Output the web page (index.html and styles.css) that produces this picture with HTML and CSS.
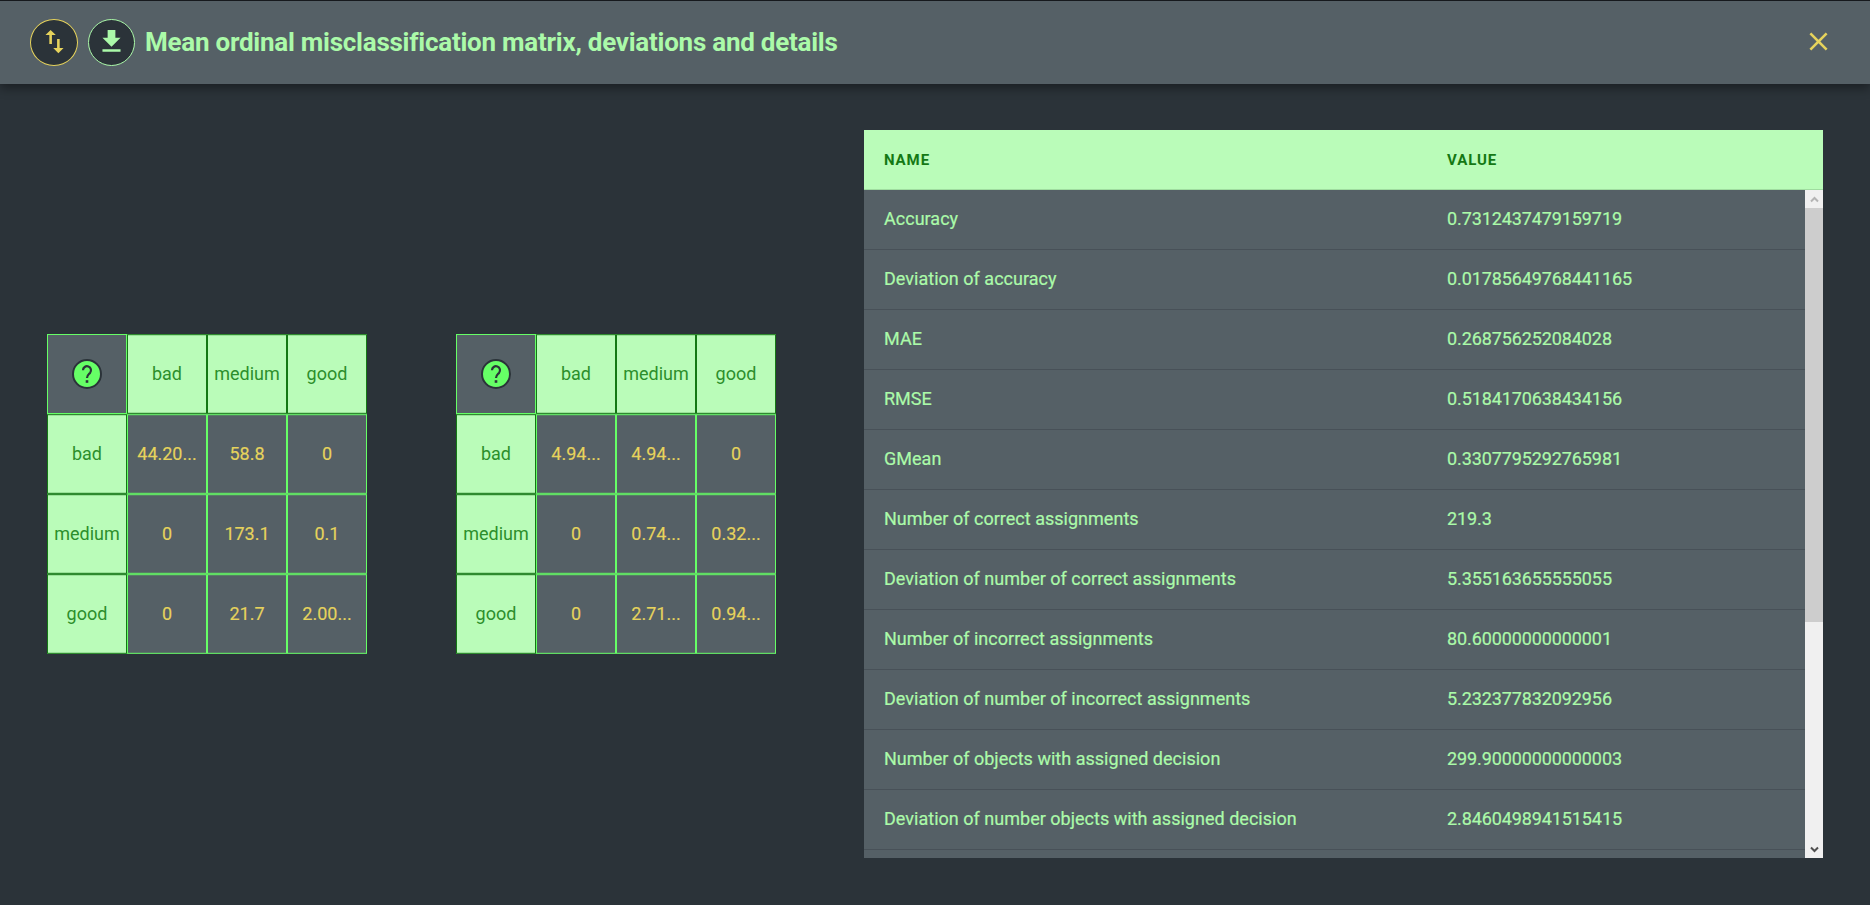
FILE: index.html
```html
<!DOCTYPE html>
<html lang="en">
<head>
<meta charset="utf-8">
<title>Mean ordinal misclassification matrix</title>
<link rel="stylesheet" href="styles.css">
</head>
<body>
<header class="bar">
  <button class="round round-yellow" aria-label="Swap"><svg width="31" height="31" viewBox="0 0 24 24"><path d="M16 17.01V10h-2v7.01h-3L15 21l4-3.99h-3zM9 3L5 6.99h3V14h2V6.99h3L9 3z"/></svg></button>
  <button class="round round-green" aria-label="Download"><svg width="31" height="31" viewBox="0 0 24 24"><path d="M19 9h-4V3H9v6H5l7 7 7-7zM5 18v2h14v-2H5z"/></svg></button>
  <h1 class="title">Mean ordinal misclassification matrix, deviations and details</h1>
  <button class="close" aria-label="Close"><svg width="31" height="31" viewBox="0 0 24 24"><path d="M19 6.41L17.59 5 12 10.59 6.41 5 5 6.41 10.59 12 5 17.59 6.41 19 12 13.41 17.59 19 19 17.59 13.41 12z"/></svg></button>
</header>
<main class="content">
  <section class="matrix">
    <div class="cell corner"><svg class="help" width="36" height="36" viewBox="0 0 36 36"><circle cx="18" cy="18" r="14"/><path d="M14 14.300a4 4 0 1 1 7 2.600c-1.400 1.500-3 2.300-3 5.100"/><rect x="16.700" y="24.200" width="2.600" height="2.600"/></svg></div>
    <div class="cell head">bad</div><div class="cell head">medium</div><div class="cell head">good</div>
    <div class="cell head">bad</div><div class="cell">44.20...</div><div class="cell">58.8</div><div class="cell">0</div>
    <div class="cell head">medium</div><div class="cell">0</div><div class="cell">173.1</div><div class="cell">0.1</div>
    <div class="cell head">good</div><div class="cell">0</div><div class="cell">21.7</div><div class="cell">2.00...</div>
  </section>
  <section class="matrix">
    <div class="cell corner"><svg class="help" width="36" height="36" viewBox="0 0 36 36"><circle cx="18" cy="18" r="14"/><path d="M14 14.300a4 4 0 1 1 7 2.600c-1.400 1.500-3 2.300-3 5.100"/><rect x="16.700" y="24.200" width="2.600" height="2.600"/></svg></div>
    <div class="cell head">bad</div><div class="cell head">medium</div><div class="cell head">good</div>
    <div class="cell head">bad</div><div class="cell">4.94...</div><div class="cell">4.94...</div><div class="cell">0</div>
    <div class="cell head">medium</div><div class="cell">0</div><div class="cell">0.74...</div><div class="cell">0.32...</div>
    <div class="cell head">good</div><div class="cell">0</div><div class="cell">2.71...</div><div class="cell">0.94...</div>
  </section>
  <section class="table">
    <div class="row thead"><span>NAME</span><span>VALUE</span></div>
    <div class="body">
      <div class="rows">
        <div class="row"><span>Accuracy</span><span class="value">0.7312437479159719</span></div>
        <div class="row"><span>Deviation of accuracy</span><span class="value">0.01785649768441165</span></div>
        <div class="row"><span>MAE</span><span class="value">0.268756252084028</span></div>
        <div class="row"><span>RMSE</span><span class="value">0.5184170638434156</span></div>
        <div class="row"><span>GMean</span><span class="value">0.3307795292765981</span></div>
        <div class="row"><span>Number of correct assignments</span><span class="value">219.3</span></div>
        <div class="row"><span>Deviation of number of correct assignments</span><span class="value">5.355163655555055</span></div>
        <div class="row"><span>Number of incorrect assignments</span><span class="value">80.60000000000001</span></div>
        <div class="row"><span>Deviation of number of incorrect assignments</span><span class="value">5.232377832092956</span></div>
        <div class="row"><span>Number of objects with assigned decision</span><span class="value">299.90000000000003</span></div>
        <div class="row"><span>Deviation of number objects with assigned decision</span><span class="value">2.8460498941515415</span></div>
      </div>
      <div class="scroll">
        <svg class="arrow up" width="18" height="18" viewBox="0 0 18 18"><path d="M6 11.500 9.500 8l3.500 3.500"/></svg>
        <div class="thumb"></div>
        <svg class="arrow down" width="18" height="18" viewBox="0 0 18 18"><path d="M6 7.500 9.500 11 13 7.500"/></svg>
      </div>
    </div>
  </section>
</main>
</body>
</html>
```
FILE: styles.css
```css
* { box-sizing: border-box; }
body {
  margin: 0;
  height: 905px;
  overflow: hidden;
  background: #2b3339;
  font-family: Roboto, "Liberation Sans", sans-serif;
}
.bar {
  display: flex;
  align-items: center;
  height: 84px;
  padding: 0 36px 0 30px;
  border-top: 1px solid #16191d;
  background: #556066;
  box-shadow: 0 4px 10px rgba(0, 0, 0, .4);
}
button { padding: 0; border: 0; background: none; display: flex; align-items: center; justify-content: center; }
.round { width: 48px; height: 47px; border-radius: 50%; background: #2b3339; border: 1px solid; }
.round-yellow { color: #e6d35c; margin-right: 10px; }
.round-green { width: 47px; color: #abfaa9; }
button svg { fill: currentColor; margin-bottom: 2px; }
.title {
  margin: 0 auto 0 10px;
  padding-bottom: 2px;
  font-size: 26px;
  line-height: 30px;
  font-weight: 700;
  letter-spacing: -.25px;
  color: #abfaa9;
  white-space: nowrap;
}
.close { width: 32px; height: 33px; color: #e6d35c; }
.content { display: flex; align-items: center; height: 820px; padding-left: 47px; }
.matrix {
  display: grid;
  grid-template-columns: repeat(4, 80px);
  grid-template-rows: repeat(4, 80px);
  margin-right: 89px;
}
.cell {
  display: flex;
  align-items: center;
  justify-content: center;
  padding-bottom: 1px;
  border: 1px solid #66ff66;
  background: #556066;
  color: #e6d35c;
  font-size: 18px;
  -webkit-text-stroke: .15px;
  transform: scaleY(.995);
}
.corner { padding: 0; transform: none; }
.head { border-color: #147814; background: #bafcb9; color: #2c8f2c; -webkit-text-stroke: 0; }
.help circle { fill: #66ff66; stroke: #2b3339; stroke-width: 2; }
.help path { fill: none; stroke: #2b3339; stroke-width: 2.2; }
.help rect { fill: #2b3339; }
.table { width: 959px; height: 728px; margin-left: -1px; background: #556066; }
.row {
  display: grid;
  grid-template-columns: 563px 1fr;
  align-items: center;
  height: 60px;
  padding: 0 0 2px 20px;
  border-bottom: 1px solid #485158;
  color: #abfaa9;
  font-size: 18px;
  letter-spacing: .02px;
  -webkit-text-stroke: .2px;
}
.value { letter-spacing: -.1px; }
.thead {
  padding: 0 0 0 20px;
  background: #bafcb9;
  color: #147814;
  border-color: #9fdc9f;
  font-size: 15px;
  font-weight: 700;
  letter-spacing: .9px;
  -webkit-text-stroke: 0;
}
.body { display: flex; height: 668px; }
.rows { flex: 1; }
.scroll { width: 18px; background: #f0f0f0; display: flex; flex-direction: column; }
.thumb { height: 414px; background: #cdcdcd; }
.arrow { fill: none; stroke: #b4b4b4; stroke-width: 2; }
.down { margin-top: auto; stroke: #505050; }
```
